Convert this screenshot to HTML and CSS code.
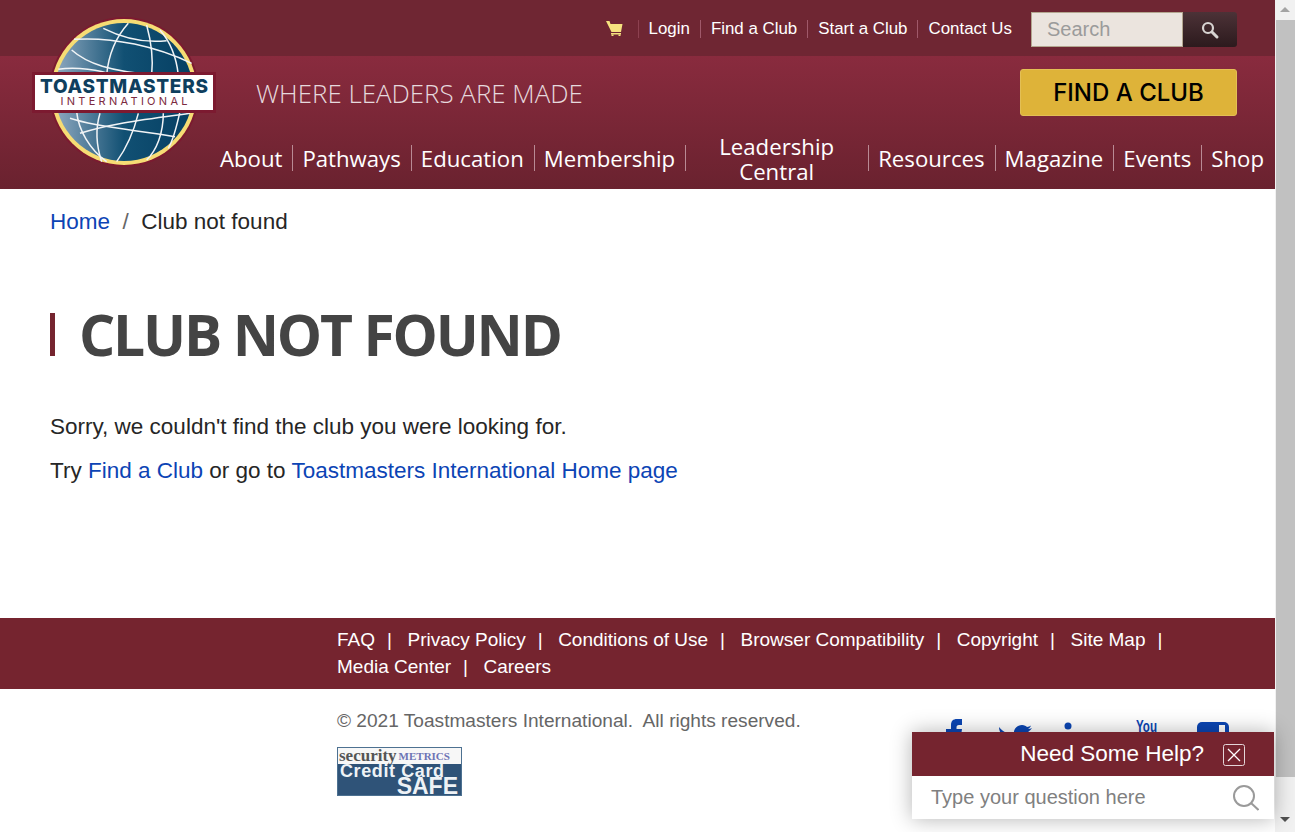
FILE: index.html
```html
<!DOCTYPE html>
<html lang="en">
<head>
  <meta charset="UTF-8">
  <meta name="viewport" content="width=device-width, initial-scale=1.0">
  <title>Club not found</title>
  <link rel="stylesheet" href="styles.css">
</head>
<body>

  <div class="page">
    <header class="site-header">
      <!-- logo sits over both header bands -->
      <a class="logo" href="#">
        <svg width="186" height="152" viewBox="0 0 186 152">
          <defs>
            <linearGradient id="globeFill" x1="0" x2="1" y1="0" y2="0">
              <stop offset="0" stop-color="#8fa9c0"/>
              <stop offset="0.5" stop-color="#115073"/>
              <stop offset="1" stop-color="#053f63"/>
            </linearGradient>
          </defs>
          <circle cx="92" cy="75" r="75" fill="#7c1a30"/>
          <circle cx="92" cy="75" r="73" fill="#f6dc74"/>
          <circle cx="92" cy="75" r="69" fill="url(#globeFill)"/>
          <!-- grid lines, drawn in 3x coordinates -->
          <g transform="translate(-32 -17) scale(.3333)" fill="none" stroke="#f1f4f6" stroke-width="4.500">
            <path d="M385 70C340 120 325 170 320 225"/>
            <path d="M440 75C455 130 460 180 455 225"/>
            <path d="M480 90C515 130 530 180 535 225"/>
            <path d="M310 85C370 115 430 130 500 122"/>
            <path d="M222 118C340 110 470 140 575 190"/>
            <path d="M215 150C260 190 330 215 470 225"/>
            <path d="M175 208C230 200 300 210 340 225"/>
            <path d="M230 335C235 390 270 450 320 485"/>
            <path d="M300 340C285 390 290 440 305 485"/>
            <path d="M415 340C400 400 375 450 350 485"/>
            <path d="M490 340C490 400 470 450 440 480"/>
            <path d="M540 335C530 380 520 420 505 445"/>
            <path d="M210 355C300 385 420 390 525 410"/>
            <path d="M240 400C330 370 430 360 570 340"/>
          </g>
          <rect x="0" y="55" width="184" height="41" fill="#7c1a30"/>
          <rect x="3" y="58" width="178" height="35" fill="#fff"/>
          <text class="logo-name" x="92" y="76" text-anchor="middle" textLength="168">TOASTMASTERS</text>
          <text class="logo-sub" x="92" y="88" text-anchor="middle" textLength="127">INTERNATIONAL</text>
        </svg>
      </a>

      <div class="top-bar">
        <a class="cart" href="#">
          <svg width="17" height="17" viewBox="0 0 17 17">
            <path fill="#f6e27f" d="M0 1h3.500l1 3h12l-1.500 8H5.500z"/>
            <rect x="5" y="13" width="10" height="1.500" fill="#f6e27f"/>
            <rect x="5.500" y="14.500" width="2" height="1.500" fill="#f6e27f"/>
            <rect x="12.500" y="14.500" width="2" height="1.500" fill="#f6e27f"/>
          </svg>
        </a>
        <ul class="top-links">
          <li><a href="#">Login</a></li>
          <li><a href="#">Find a Club</a></li>
          <li><a href="#">Start a Club</a></li>
          <li><a href="#">Contact Us</a></li>
        </ul>
        <div class="search">
          <span class="search-box">Search</span>
          <span class="search-btn">
            <svg width="20" height="20" viewBox="0 0 20 20">
              <circle cx="8" cy="8" r="5" fill="none" stroke="#d8d4d2" stroke-width="2.200"/>
              <path d="M12 12l5 5" stroke="#d8d4d2" stroke-width="3" stroke-linecap="round"/>
            </svg>
          </span>
        </div>
      </div>

      <div class="main-band">
        <div class="tag-row">
          <div class="tagline">WHERE LEADERS ARE MADE</div>
          <a class="find-btn" href="#">FIND A CLUB</a>
        </div>
        <ul class="main-nav">
          <li><a href="#">About</a></li>
          <li><a href="#">Pathways</a></li>
          <li><a href="#">Education</a></li>
          <li><a href="#">Membership</a></li>
          <li class="wide"><a href="#">Leadership Central</a></li>
          <li><a href="#">Resources</a></li>
          <li><a href="#">Magazine</a></li>
          <li><a href="#">Events</a></li>
          <li><a href="#">Shop</a></li>
        </ul>
      </div>
    </header>

    <main class="content">
      <div class="breadcrumb">
        <a href="#">Home</a><span class="slash">/</span><span>Club not found</span>
      </div>
      <h1>CLUB NOT FOUND</h1>
      <p>Sorry, we couldn't find the club you were looking for.</p>
      <p>Try <a href="#">Find a Club</a> or go to <a href="#">Toastmasters International Home page</a></p>
    </main>

    <div class="footer-links">
      <ul>
        <li><a href="#">FAQ</a></li>
        <li><a href="#">Privacy Policy</a></li>
        <li><a href="#">Conditions of Use</a></li>
        <li><a href="#">Browser Compatibility</a></li>
        <li><a href="#">Copyright</a></li>
        <li><a href="#">Site Map</a></li>
        <li><a href="#">Media Center</a></li>
        <li class="last"><a href="#">Careers</a></li>
      </ul>
    </div>

    <footer class="footer-bottom">
      <div class="legal">
        <div class="copyright">© 2021 Toastmasters International.&nbsp; All rights reserved.</div>
        <div class="badge">
          <div class="badge-top"><span class="badge-sec">security</span><span class="badge-met">METRICS</span></div>
          <div class="badge-main"><span class="badge-cc">Credit Card</span><span class="badge-safe">SAFE</span></div>
        </div>
      </div>
      <div class="social">
        <svg class="s-fb" width="16" height="40" viewBox="0 0 16 40"><path fill="#0b46b4" d="M5 40V17H0v-7h5V6c0-4 2-6 6-6h5v6h-3c-2 0-2.500 1-2.500 2.500V10H16l-1 7h-4.500v23z"/></svg>
        <svg class="s-tw" width="34" height="30" viewBox="0 0 34 30"><path fill="#0b46b4" d="M0 6c4 5 9 7 15 8-1-6 3-10 8-10 2.500 0 4 1 5 2 1.500 0 3-.8 4-1.500-.5 1.500-1.500 2.700-3 3.500 1.500 0 2.800-.4 4-1-1 1.500-2 2.600-3.500 3.500C30 22 20 30 10 30 6 30 3 29 0 27c5 .5 8-1 10-3-4 0-6-2-7-4h3c-3-1-5-3.500-5-7 1 .6 2 1 3 1-3-2-4-5-4-8z"/></svg>
        <svg class="s-in" width="16" height="30" viewBox="0 0 16 30"><circle cx="8" cy="7" r="3.500" fill="#0b46b4"/><rect x="5" y="13" width="6" height="17" fill="#0b46b4"/></svg>
        <svg class="s-yt" width="21" height="20" viewBox="0 0 21 20"><text class="s-yt-text" x="0" y="13" textLength="21" lengthAdjust="spacingAndGlyphs">You</text></svg>
        <span class="s-blog"><span class="s-blog-notch"></span></span>
      </div>
    </footer>
  </div>

  <div class="scrollbar">
    <span class="arrow-up"></span>
    <span class="thumb"></span>
    <span class="arrow-down"></span>
  </div>

  <div class="help">
    <div class="help-head">
      <span>Need Some Help?</span>
      <svg class="help-close" width="22" height="22" viewBox="0 0 22 22">
        <rect x="0.500" y="0.500" width="21" height="21" rx="2" fill="none" stroke="#e4d5d8"/>
        <path d="M5 5l12 12M17 5L5 17" stroke="#fff" stroke-width="1.300"/>
      </svg>
    </div>
    <div class="help-input">
      <span>Type your question here</span>
      <svg width="26" height="26" viewBox="0 0 26 26">
        <circle cx="11" cy="11" r="10" fill="none" stroke="#9a9a9a" stroke-width="2"/>
        <path d="M18 18l7.500 7" stroke="#9a9a9a" stroke-width="2"/>
      </svg>
    </div>
  </div>

</body>
</html>
```

FILE: styles.css
```css
html, body {
  height: 100%;
}

body {
  font-family: 'Liberation Sans', Arial, sans-serif;
  background-color: #fff;
  color: #262626;
  margin: 0;
  display: flex;
  overflow: hidden;
}

a {
  color: #0c44b5;
  text-decoration: none;
}

ul {
  list-style: none;
  margin: 0;
  padding: 0;
}

.page {
  width: 1275px;
  flex: none;
  position: relative;
}

/* header */
.site-header {
  position: relative;
}

.logo {
  position: absolute;
  left: 32px;
  top: 17px;
  line-height: 0;
}

.logo-name {
  font-family: 'Inter', sans-serif;
  font-weight: 800;
  font-size: 19px;
  fill: #0f3f5e;
}

.logo-sub {
  font-family: 'Inter', sans-serif;
  font-size: 11px;
  fill: #7c2a40;
}

.top-bar {
  height: 56px;
  background-color: #6f2633;
  display: flex;
  align-items: center;
  justify-content: flex-end;
  padding-right: 38px;
  box-sizing: border-box;
}

.cart {
  line-height: 0;
  margin-right: 15px;
}

.top-links {
  display: flex;
  font-size: 16.900px;
  border-left: 1px solid #8d4150;
  margin-right: 19px;
  margin-top: 1px;
}

.top-links li {
  padding: 0 10px;
  line-height: 18px;
  border-left: 1px solid #a0596a;
}

.top-links li:first-child {
  border-left: none;
}

.top-links li:last-child {
  padding-right: 0;
}

.top-links a {
  color: #fff;
}

.search {
  display: flex;
  height: 35px;
  align-self: flex-start;
  margin-top: 12px;
}

.search-box {
  width: 152px;
  box-sizing: border-box;
  background-color: #ebe4de;
  border: 1px solid #b3a68f;
  color: #9b9b9b;
  font-size: 20px;
  line-height: 33px;
  padding-left: 15px;
}

.search-btn {
  width: 54px;
  border-radius: 0 3px 3px 0;
  background: linear-gradient(#4c3237, #2c1a1d);
  display: flex;
  align-items: center;
  justify-content: center;
}

.main-band {
  height: 133px;
  box-sizing: border-box;
  background: linear-gradient(#892b3e, #6a222f);
  padding-top: 13px;
}

.tag-row {
  display: flex;
  justify-content: space-between;
  align-items: center;
  padding: 0 38px 0 256px;
}

.tagline {
  font-family: 'Open Sans', sans-serif;
  font-weight: 300;
  font-size: 25.900px;
  color: #e6d9dd;
}

.find-btn {
  width: 217px;
  height: 47px;
  box-sizing: border-box;
  background-color: #deb339;
  border: 1px solid #e3bf55;
  border-radius: 3px;
  color: #000;
  font-family: 'Inter', sans-serif;
  font-weight: 500;
  font-size: 24px;
  line-height: 45px;
  text-align: center;
}

.main-nav {
  display: flex;
  justify-content: flex-end;
  align-items: center;
  margin-top: 29px;
  font-family: 'Open Sans', sans-serif;
  font-size: 22.200px;
  line-height: 25px;
}

.main-nav li {
  padding: 0 10px 0 9px;
  border-left: 1px solid #b98a94;
  height: 26px;
  display: flex;
  align-items: center;
  white-space: nowrap;
}

.main-nav li:first-child {
  border-left: none;
}

.main-nav li:last-child {
  padding-right: 11px;
}

.main-nav .wide {
  width: 183px;
  box-sizing: border-box;
  white-space: normal;
  text-align: center;
  justify-content: center;
}

.main-nav .wide a {
  margin-top: 1px;
}

.main-nav a {
  color: #fff;
}

/* content */
.content {
  height: 429px;
  box-sizing: border-box;
  padding: 18px 50px 0;
  font-size: 22.500px;
}

.breadcrumb {
  line-height: 30px;
}

.slash {
  color: #666;
  margin: 0 12.500px;
}

h1 {
  font-family: 'Open Sans', sans-serif;
  font-weight: 700;
  font-size: 57px;
  letter-spacing: -2.200px;
  line-height: 43px;
  color: #444;
  margin: 76px 0 56px;
  padding-left: 24px;
  border-left: 5px solid #75242f;
}

.content p {
  margin: 0 0 14px;
  line-height: 30px;
}

/* footer */
.footer-links {
  height: 71px;
  box-sizing: border-box;
  background-color: #75242f;
  padding: 8px 80px 0 337px;
}

.footer-links ul {
  display: flex;
  flex-wrap: wrap;
  font-size: 19px;
  line-height: 27px;
}

.footer-links li {
  color: #fff;
  margin-right: 15.500px;
}

.footer-links li::after {
  content: "|";
  margin-left: 12px;
}

.footer-links li.last::after {
  content: none;
}

.footer-links a {
  color: #fff;
}

.footer-bottom {
  display: flex;
  padding: 20px 46px 0 337px;
  justify-content: space-between;
}

.copyright {
  font-size: 19.100px;
  line-height: 24px;
  color: #666;
}

.badge {
  width: 125px;
  height: 49px;
  margin-top: 14px;
  display: flex;
  flex-direction: column;
  box-sizing: border-box;
  border: 1px solid #4d7191;
}

.badge-top {
  height: 16px;
  background-color: #f7f7f7;
  display: flex;
  align-items: center;
  padding-left: 1px;
  white-space: nowrap;
}

.badge-sec {
  font-family: 'Liberation Serif', serif;
  font-weight: bold;
  font-size: 17px;
  color: #555;
}

.badge-met {
  font-family: 'Liberation Serif', serif;
  font-weight: bold;
  font-size: 11px;
  color: #6d74b5;
  margin-left: 2px;
}

.badge-main {
  flex: 1;
  background-color: #2f5378;
  color: #eef2f6;
  font-weight: bold;
  display: flex;
  flex-direction: column;
  white-space: nowrap;
}

.badge-cc {
  font-size: 18px;
  letter-spacing: 0.600px;
  line-height: 14px;
  padding-left: 2px;
}

.badge-safe {
  align-self: flex-end;
  font-size: 23px;
  line-height: 17px;
  padding-right: 3px;
}

.social {
  display: flex;
  align-items: flex-start;
  padding-top: 10px;
}

.s-fb {
  margin-right: 37px;
}

.s-tw {
  margin-top: 2px;
  margin-right: 27px;
}

.s-in {
  margin-right: 60px;
}

.s-yt {
  margin-right: 40px;
}

.s-yt-text {
  font-family: 'Liberation Sans', sans-serif;
  font-weight: bold;
  font-size: 17px;
  fill: #0b46b4;
}

.s-blog {
  width: 32px;
  height: 40px;
  margin-top: 3px;
  border-radius: 5px 5px 0 0;
  background-color: #0b46b4;
  position: relative;
}

.s-blog-notch {
  position: absolute;
  right: 4px;
  top: 3px;
  width: 6px;
  height: 10px;
  background-color: #fff;
}

/* fake window scrollbar */
.scrollbar {
  width: 20px;
  flex: none;
  height: 832px;
  background-color: #f1f1f1;
  display: flex;
  flex-direction: column;
  align-items: center;
}

.arrow-up {
  width: 0;
  height: 0;
  margin: 7px 0 8px;
  border: 5px solid transparent;
  border-top: none;
  border-bottom-color: #a3a3a3;
}

.thumb {
  width: 19px;
  align-self: flex-end;
  height: 757px;
  background-color: #c1c1c1;
}

.arrow-down {
  width: 0;
  height: 0;
  margin-top: 40px;
  border: 5px solid transparent;
  border-bottom: none;
  border-top-color: #505050;
}

/* help widget over the footer */
.help {
  position: fixed;
  left: 912px;
  top: 732px;
  width: 362px;
  box-shadow: 0 0 20px rgba(0, 0, 0, 0.3);
}

.help-head {
  height: 44px;
  background-color: #75242f;
  color: #fff;
  font-size: 22.500px;
  display: flex;
  align-items: center;
  justify-content: flex-end;
  padding-right: 29px;
  box-sizing: border-box;
}

.help-close {
  margin-left: 19px;
  margin-top: 2px;
}

.help-input {
  height: 43px;
  background-color: #fff;
  color: #808080;
  font-size: 20px;
  display: flex;
  align-items: center;
  justify-content: space-between;
  padding: 0 15px 0 19px;
}
```
